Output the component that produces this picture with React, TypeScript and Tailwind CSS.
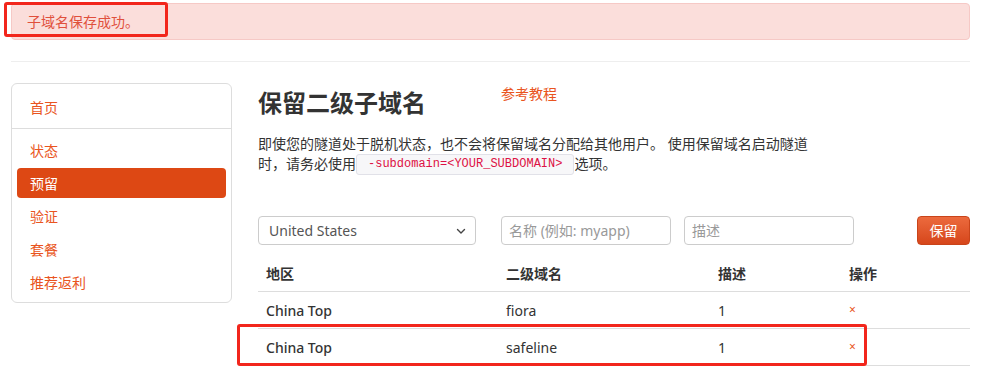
import React from "react";

const font = { fontFamily: '"Noto Sans", "Noto Sans CJK SC", sans-serif' };

function NavItem({ label, active }: { label: string; active?: boolean }) {
  return (
    <div
      className={
        "mx-[5px] h-[30px] flex items-center pl-[13px] rounded-[4px] text-[14px] " +
        (active ? "bg-[#dd4814] text-white" : "text-[#e95420]")
      }
    >
      {label}
    </div>
  );
}

export default function App() {
  const rows = [
    { region: "China Top", name: "fiora", desc: "1" },
    { region: "China Top", name: "safeline", desc: "1" },
  ];
  return (
    <div className="relative w-[995px] h-[368px] overflow-hidden bg-white text-[#333]" style={font}>
      <div className="pl-[11px] w-[970px]">
        {/* alert */}
        <div className="mt-[3px] h-[37px] rounded-[4px] border border-[#f6c9c6] bg-[#fbdedb] text-[14px] leading-[35px] text-[#e0503c] flex">
          <div className="w-[15px] shrink-0" />
          <span>子域名保存成功。</span>
        </div>
        <div className="mt-[21px] border-t border-[#eeeeee]" />

        <div className="mt-[21px] flex">
          {/* sidebar */}
          <div className="w-[221px] h-[220px] shrink-0 rounded-[6px] border border-[#dddddd] pt-[8px]">
            <NavItem label="首页" />
            <div className="mt-[6px] border-t border-[#dddddd]" />
            <div className="mt-[6px] flex flex-col gap-[3px]">
              <NavItem label="状态" />
              <NavItem label="预留" active />
              <NavItem label="验证" />
              <NavItem label="套餐" />
              <NavItem label="推荐返利" />
            </div>
          </div>

          {/* content */}
          <div className="ml-[26px] w-[712px]">
            <div className="flex items-start">
              <h1 className="mt-[5px] text-[24px] leading-[30px] font-bold text-[#333]">保留二级子域名</h1>
              <a className="ml-[75px] mt-[1px] text-[14px] leading-[20px] text-[#e95420]">参考教程</a>
            </div>
            <div className="mt-[16px] w-[556px] text-[14px] leading-[20px] text-[#333]">
              <div>即使您的隧道处于脱机状态，也不会将保留域名分配给其他用户。 使用保留域名启动隧道</div>
              <div className="flex items-center h-[20px]">
                <span>时，请务必使用</span>
                <code
                  className="px-[11px] h-[21px] leading-[19px] rounded-[3px] border border-[#e1e1e8] bg-[#f7f7f9] text-[12px] text-[#dd1144]"
                  style={{ fontFamily: '"Liberation Mono", monospace' }}
                >
                  -subdomain=&lt;YOUR_SUBDOMAIN&gt;
                </code>
                <span>选项。</span>
              </div>
            </div>

            {/* form */}
            <div className="mt-[42px] flex items-center h-[29px]">
              <div className="w-[218px] h-[29px] rounded-[4px] border border-[#cccccc] flex items-center justify-between pl-[10px] pr-[9px] text-[14px] text-[#555]">
                <span>United States</span>
                <svg width="10" height="10" viewBox="0 0 10 10" fill="none">
                  <path d="M1.5 3.5 L5 7 L8.5 3.5" stroke="#444" strokeWidth="1.4" strokeLinecap="round" strokeLinejoin="round" />
                </svg>
              </div>
              <div className="ml-[25px] w-[170px] h-[29px] rounded-[4px] border border-[#cccccc] flex items-center pl-[7px] text-[14px] text-[#999]">
                名称 (例如: myapp)
              </div>
              <div className="ml-[13px] w-[170px] h-[29px] rounded-[4px] border border-[#cccccc] flex items-center pl-[7px] text-[14px] text-[#999]">
                描述
              </div>
              <div className="ml-[63px] w-[53px] h-[29px] rounded-[4px] bg-gradient-to-b from-[#ec6a3d] to-[#d6461a] border border-[#c9441a] flex items-center justify-center text-[14px] text-white">
                保留
              </div>
            </div>

            {/* table */}
            <div className="mt-[11px] text-[14px]">
              <div className="grid grid-cols-[240px_212px_131px_129px] h-[36px] items-center border-b border-[#dddddd] font-bold text-[#333]">
                <div className="pl-[8px]">地区</div>
                <div className="pl-[8px]">二级域名</div>
                <div className="pl-[8px]">描述</div>
                <div className="pl-[8px]">操作</div>
              </div>
              {rows.map((r, i) => (
                <div
                  key={i}
                  className="grid grid-cols-[240px_212px_131px_129px] h-[37px] items-center border-b border-[#dddddd] text-[#333]"
                >
                  <div className="pl-[8px] font-medium">{r.region}</div>
                  <div className="pl-[8px]">{r.name}</div>
                  <div className="pl-[8px]">{r.desc}</div>
                  <div className="pl-[8px] text-[12px] text-[#e95420]">×</div>
                </div>
              ))}
            </div>
          </div>
        </div>
      </div>

      {/* annotation boxes */}
      <div className="absolute left-[4px] top-[2px] w-[164px] h-[35px] rounded-[3px] border-[3px] border-[#f2261c]" />
      <div className="absolute left-[237px] top-[324px] w-[630px] h-[42px] rounded-[3px] border-[3px] border-[#f2261c]" />
    </div>
  );
}
